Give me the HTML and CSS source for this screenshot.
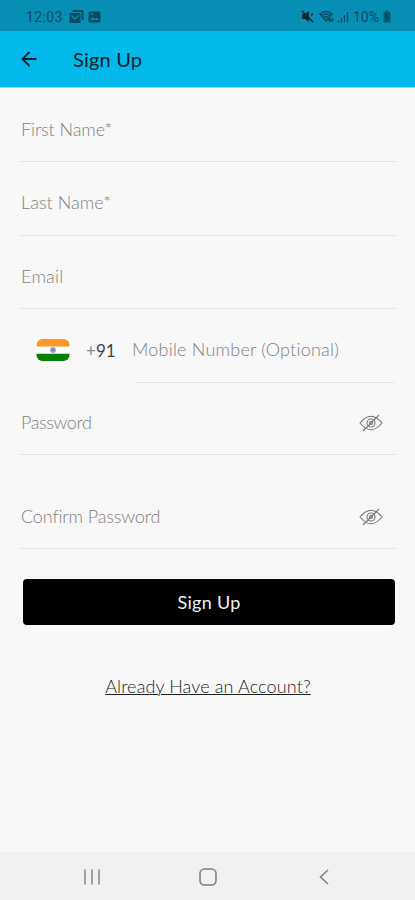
FILE: index.html
```html
<!DOCTYPE html>
<html lang="en">
<head>
<meta charset="utf-8">
<title>Sign Up</title>
<link rel="stylesheet" href="styles.css">
</head>
<body>
<div class="status">
  <span class="clock">12:03</span>
  <svg class="mail" width="15" height="14" viewBox="0 0 15 14"><path d="M3.5 1h10v9" fill="none" stroke="currentColor" stroke-width="2"/><rect x="0.5" y="3" width="11" height="10" rx="1" fill="currentColor"/><path d="M2.5 5.5L6 9l4-4" fill="none" stroke="#078eb5" stroke-width="1.4"/></svg>
  <svg class="photo" width="13" height="12" viewBox="0 0 13 12"><rect x=".5" y=".5" width="12" height="11" rx="1.5" fill="currentColor"/><path d="M2 9l3-3 2 2 1.5-1.5L11 9z" fill="#078eb5"/><path d="M2.5 3h3" stroke="#078eb5"/></svg>
  <svg class="mute" width="13" height="13" viewBox="0 0 13 13"><path d="M1 4h3l4-3v11L4 9H1z" fill="currentColor"/><path d="M1 1l11 11M10 5l2-1" stroke="currentColor" stroke-width="1.5"/></svg>
  <svg class="wifi" width="16" height="13" viewBox="0 0 16 13" fill="none" stroke="currentColor" stroke-width="1.3"><path d="M1 4q6-5 12 0L7 11zM3 5.500q4-3 8 0M5 7.500q2-1.500 4 0"/><path d="M9 10h6M11 8v4M13 8v4"/></svg>
  <svg class="signal" width="12" height="12" viewBox="0 0 12 12" stroke="currentColor" stroke-width="1.4"><path d="M1.500 9v2.500M4.500 7v4.500M7.500 4v7.500M10.500 1v10.500"/></svg>
  <span class="percent">10%</span>
  <svg class="battery" width="8" height="13" viewBox="0 0 8 13"><path d="M.5 2h2V.5h3V2h2v10.500h-7z" fill="currentColor" opacity=".75"/><path d="M4.500 3L2.500 7h3l-2 4" fill="none" stroke="#033f52"/></svg>
</div>
<header class="bar">
  <svg width="16" height="16" viewBox="0 0 16 16" fill="none" stroke="#04222c" stroke-width="1.8"><path d="M15.500 8H1.500M8.500 1L1.500 8l7 7"/></svg>
  <h1>Sign Up</h1>
</header>
<main class="form">
  <div class="field"><span class="t-first">First Name*</span></div>
  <div class="field"><span class="t-last">Last Name*</span></div>
  <div class="field"><span class="t-email">Email</span></div>
  <div class="phone">
    <svg class="flag" width="34" height="22" viewBox="0 0 34 22"><defs><clipPath id="round"><rect width="33" height="22" x=".5" rx="6"/></clipPath></defs><g clip-path="url(#round)"><path fill="#fff" d="M0 0h34v22H0z"/><path fill="#fb9728" d="M0 0h34v7.500H0z"/><path fill="#078009" d="M0 14.700h34V22H0z"/></g><circle cx="17" cy="11" r="3" fill="#a5a5dc"/><circle cx="17" cy="11" r="1.500" fill="#7777c4"/></svg>
    <span class="code"><i>+</i>91</span>
    <div class="field number"><span class="t-mobile">Mobile Number (Optional)</span></div>
  </div>
  <div class="field password"><span class="t-pass">Password</span>
    <svg class="eye" width="24" height="18" viewBox="0 0 24 18"><path d="M1 9Q12-4.500 23 9 12 22.500 1 9z"/><circle cx="12" cy="9" r="4"/><circle cx="12" cy="9" r="1.500"/><path d="M4 17L20 1"/></svg>
  </div>
  <div class="field confirm"><span class="t-confirm">Confirm Password</span>
    <svg class="eye" width="24" height="18" viewBox="0 0 24 18"><path d="M1 9Q12-4.500 23 9 12 22.500 1 9z"/><circle cx="12" cy="9" r="4"/><circle cx="12" cy="9" r="1.500"/><path d="M4 17L20 1"/></svg>
  </div>
  <button class="submit">Sign Up</button>
  <a class="login">Already Have an Account?</a>
</main>
<nav class="nav">
  <svg width="16" height="16" viewBox="0 0 16 16" stroke="#858585" stroke-width="1.500"><path d="M1 .5v15M8 .5v15M15 .5v15"/></svg>
  <svg class="home" width="18" height="18" viewBox="0 0 18 18" fill="none" stroke="#808080" stroke-width="1.600"><rect x="1" y="1" width="16" height="16" rx="4.500"/></svg>
  <svg width="10" height="16" viewBox="0 0 10 16" fill="none" stroke="#808080" stroke-width="1.600"><path d="M9 1L1.500 8 9 15"/></svg>
</nav>
</body>
</html>
```
FILE: styles.css
```css
* { box-sizing: border-box; }
body {
  margin: 0;
  height: 900px;
  display: flex;
  flex-direction: column;
  background: #f8f8f8;
  font-family: Lato, "Liberation Sans", sans-serif;
  font-variant-ligatures: none;
  overflow: hidden;
}
svg { flex: none; }
.status {
  height: 31px;
  display: flex;
  align-items: center;
  padding: 2px 24px 0 26px;
  background: #078eb5;
  color: #064c61;
  font: 14px/18px Roboto, sans-serif;
}
.clock { width: 43px; letter-spacing: .4px; }
.photo { margin-left: 4px; }
.mute { margin-left: auto; color: #042c39; }
.wifi { margin-left: 5px; }
.signal { margin-left: 2px; }
.percent { margin-left: 4px; width: 28px; }
.battery { margin-left: 2px; }
.bar {
  height: 57px;
  display: flex;
  align-items: center;
  padding-left: 21px;
  background: #03b9eb;
  border-bottom: 1px solid #8bdcf2;
}
.bar h1 {
  margin: 0 0 0 36px;
  font-size: 20px;
  line-height: 28px;
  font-weight: 400;
  letter-spacing: .2px;
  color: #04222c;
}
.form {
  flex: 1;
  display: flex;
  flex-direction: column;
  padding: 0 20px 0 21px;
}
.field {
  height: 73.5px;
  display: flex;
  align-items: center;
  padding-top: 8px;
  border-bottom: 1px solid #e0e0e0;
  font-size: 18px;
  font-weight: 300;
  line-height: 24px;
  color: #808080;
  white-space: nowrap;
}
.field:first-child { height: 74px; }
.t-first { letter-spacing: -.1px; }
.t-last { letter-spacing: .03px; }
.t-email { letter-spacing: .25px; }
.t-mobile { letter-spacing: .22px; }
.t-pass { letter-spacing: -.4px; }
.t-confirm { letter-spacing: -.13px; }
.phone {
  height: 73.5px;
  display: flex;
  align-items: center;
}
.flag { margin: 9px 0 0 15px; }
.code {
  width: 46px;
  margin: 10px 0 0 16px;
  font-size: 17px;
  line-height: 24px;
  color: #444;
}
.code i { font-style: normal; color: #8a8a8a; }
.number {
  flex: 1;
  border-image: linear-gradient(90deg, transparent 4px, #e5e5e5 4px) 1;
}
.password { height: 72.5px; }
.confirm { height: 93.5px; padding-top: 30px; }
.eye {
  margin: 1px 12px 0 auto;
  fill: none;
  stroke: #777;
  stroke-width: 1.1;
}
.submit {
  height: 46px;
  flex: none;
  margin: 30px 0 0 2px;
  padding: 1px 0 0;
  border: 0;
  border-radius: 4px;
  background: #000;
  color: #f2f2f2;
  font: 400 18px/24px Lato, sans-serif;
  letter-spacing: .3px;
}
.login {
  align-self: center;
  margin-top: 49px;
  font-size: 18px;
  font-weight: 300;
  line-height: 24px;
  letter-spacing: .12px;
  color: #222;
  text-decoration: underline;
  text-decoration-thickness: 1px;
}
.nav {
  height: 48px;
  display: flex;
  align-items: center;
  justify-content: space-between;
  padding: 1px 86px 0 84px;
  background: #f1f1f1;
}
.home { margin-right: 4px; }
```
